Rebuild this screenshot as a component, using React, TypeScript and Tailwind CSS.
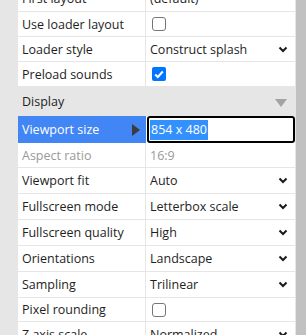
import React from "react";

type Row =
  | { kind: "text"; label: string; value: string; h: string; muted?: boolean }
  | { kind: "select"; label: string; value: string; h: string }
  | { kind: "check"; label: string; checked: boolean; h: string }
  | { kind: "header"; label: string; h: string }
  | { kind: "edit"; label: string; value: string; h: string };

const rows: Row[] = [
  { kind: "text", label: "First layout", value: "(default)", h: "h-[26px]" },
  { kind: "check", label: "Use loader layout", checked: false, h: "h-[25px]" },
  { kind: "select", label: "Loader style", value: "Construct splash", h: "h-[25px]" },
  { kind: "check", label: "Preload sounds", checked: true, h: "h-[25px]" },
  { kind: "header", label: "Display", h: "h-[29px]" },
  { kind: "edit", label: "Viewport size", value: "854 x 480", h: "h-[27px]" },
  { kind: "text", label: "Aspect ratio", value: "16:9", h: "h-[25px]", muted: true },
  { kind: "select", label: "Viewport fit", value: "Auto", h: "h-[26px]" },
  { kind: "select", label: "Fullscreen mode", value: "Letterbox scale", h: "h-[26px]" },
  { kind: "select", label: "Fullscreen quality", value: "High", h: "h-[26px]" },
  { kind: "select", label: "Orientations", value: "Landscape", h: "h-[26px]" },
  { kind: "select", label: "Sampling", value: "Trilinear", h: "h-[26px]" },
  { kind: "check", label: "Pixel rounding", checked: false, h: "h-[24px]" },
  { kind: "select", label: "Z axis scale", value: "Normalized", h: "h-[26px]" },
];

const Chevron = () => (
  <svg width="10" height="7" viewBox="0 0 10 7" className="ml-auto mr-[7px]">
    <path d="M1.5 1.5 L5 5 L8.5 1.5" fill="none" stroke="#1a1a1a" strokeWidth="2" />
  </svg>
);

const CheckBox = ({ checked }: { checked: boolean }) =>
  checked ? (
    <span className="ml-[2px] w-[14px] h-[14px] rounded-[2px] bg-[#0075ff] flex items-center justify-center">
      <svg width="10" height="9" viewBox="0 0 10 9">
        <path d="M1.2 4.6 L3.8 7 L8.8 1.5" fill="none" stroke="#fff" strokeWidth="2" />
      </svg>
    </span>
  ) : (
    <span className="ml-[2px] w-[14px] h-[14px] rounded-[3px] border border-[#767676] bg-white" />
  );

const App = () => {
  return (
    <div
      className="w-[306px] h-[335px] overflow-hidden bg-[#e6e6e6] flex text-[12.5px] text-[#1e1e1e]"
      style={{ fontFamily: '"Open Sans", "Noto Sans", sans-serif' }}
    >
      <div className="w-[18px] shrink-0" />
      <div className="w-[277px] shrink-0 -mt-[14px]">
        {rows.map((r) => {
          if (r.kind === "header") {
            return (
              <div key={r.label} className={`${r.h} bg-[#e6e6e6] flex items-center pl-[4px] pt-[2px]`}>
                <span>{r.label}</span>
                <svg width="12" height="8" viewBox="0 0 12 8" className="ml-auto mr-[8px]">
                  <path d="M0 0 H12 L6 8 Z" fill="#a3a3a3" />
                </svg>
              </div>
            );
          }
          if (r.kind === "edit") {
            return (
              <div key={r.label} className={`${r.h} flex bg-white`}>
                <div className="w-[128px] bg-[#4285f4] text-white flex items-center pl-[4px] pt-[2px] border-b border-[#4285f4]">
                  <span>{r.label}</span>
                  <svg width="8" height="12" viewBox="0 0 8 12" className="ml-auto mr-[6px]">
                    <path d="M0 0 L8 6 L0 12 Z" fill="#3c3c3c" />
                  </svg>
                </div>
                <div className="w-[1px] bg-white" />
                <div className="flex-1 border-2 border-black rounded-[3px] flex items-center pl-[1px]">
                  <span className="bg-[#3390ff] text-white px-[1px] leading-[20px]">{r.value}</span>
                </div>
              </div>
            );
          }
          const muted = r.kind === "text" && r.muted ? "text-[#999]" : "";
          return (
            <div key={r.label} className={`${r.h} flex bg-white border-b border-[#e6e6e6]`}>
              <div className={`w-[128px] border-r border-[#e6e6e6] flex items-center pl-[4px] pt-[2px] ${muted}`}>
                {r.label}
              </div>
              <div className={`flex-1 flex items-center pl-[4px] ${muted}`}>
                {r.kind === "check" ? (
                  <CheckBox checked={r.checked} />
                ) : (
                  <span className="pt-[2px]">{r.value}</span>
                )}
                {r.kind === "select" && <Chevron />}
              </div>
            </div>
          );
        })}
      </div>
      <div className="w-[1px] shrink-0 bg-[#e6e6e6]" />
      <div className="flex-1 bg-[#c1c1c1]" />
    </div>
  );
};

export default App;
